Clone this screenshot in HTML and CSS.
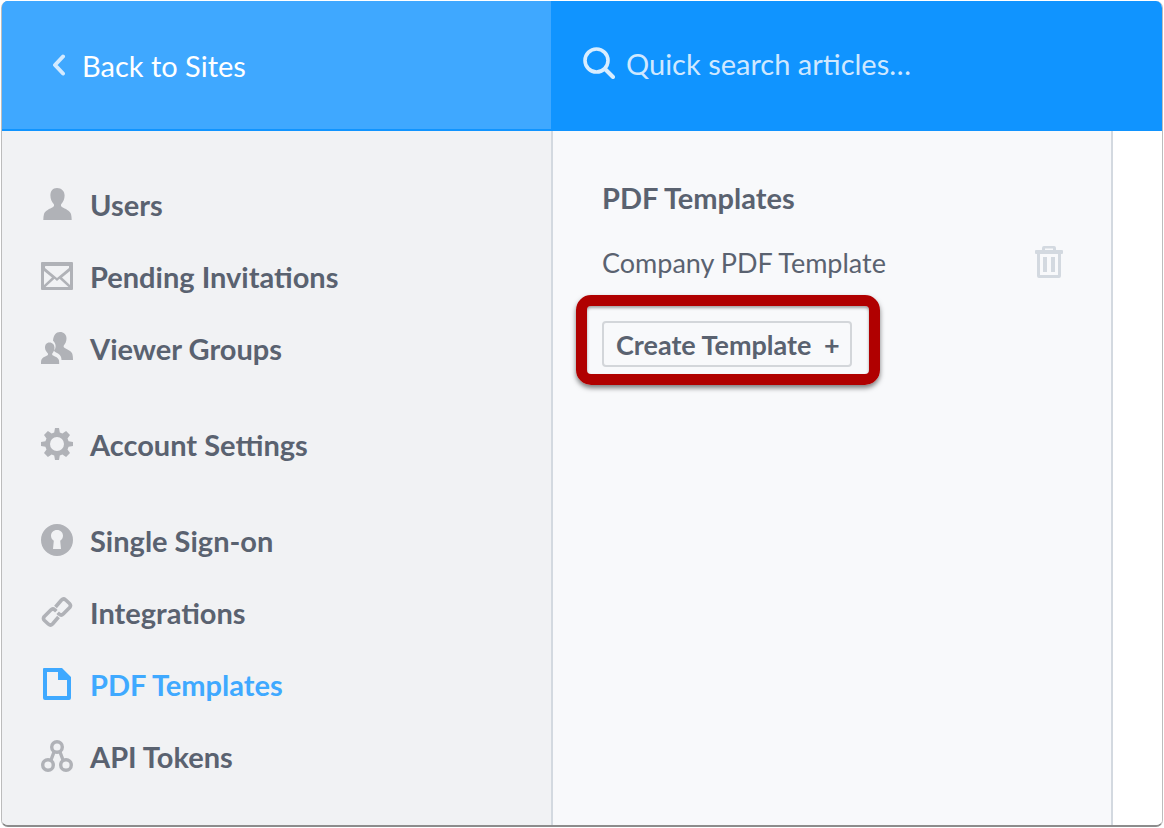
FILE: index.html
```html
<!DOCTYPE html>
<html lang="en">
<head>
    <meta charset="UTF-8">
    <meta name="viewport" content="width=device-width, initial-scale=1.0">
    <title>PDF Templates</title>
    <link rel="stylesheet" href="styles.css">
</head>
<body>
    <div class="window">
        <header class="top-bar">
            <a class="back-link">
                <svg class="back-icon" viewBox="0 0 14 22"><path d="M11 2.5 3 11l8 8.5" fill="none" stroke="currentColor" stroke-width="4" stroke-linecap="round" stroke-linejoin="round"/></svg>
                <span>Back to Sites</span>
            </a>
            <div class="search-box">
                <svg class="search-icon" viewBox="0 0 32 32"><circle cx="13.5" cy="13.5" r="11.5" fill="none" stroke="currentColor" stroke-width="3.6"/><path d="M22 22l8 8" fill="none" stroke="currentColor" stroke-width="4" stroke-linecap="round"/></svg>
                <span>Quick search articles…</span>
            </div>
        </header>

        <div class="panes">
            <nav class="side-nav">
                <ul class="nav-group">
                    <li class="nav-item">
                        <svg class="nav-icon" viewBox="0 0 32 32"><path d="M16 0c4.6 0 7.6 3.2 7.6 7.6 0 3.400-1.300 6.400-3.300 8.400-.6.900-.5 2.200.6 2.900 3.500 1.800 7.900 3.600 9.100 7.100.4 1.700.7 3.700.7 6H2.300c0-2.300.3-4.300.7-6 1.200-3.500 5.600-5.300 9.100-7.100 1.100-.7 1.200-2 .6-2.900-2-2-3.300-5-3.300-8.400C9.400 3.200 11.400 0 16 0z"/></svg>
                        <span>Users</span>
                    </li>
                    <li class="nav-item">
                        <svg class="nav-icon" viewBox="0 0 32 32"><path fill-rule="evenodd" d="M1 2h30a1 1 0 0 1 1 1v26a1 1 0 0 1-1 1H1a1 1 0 0 1-1-1V3a1 1 0 0 1 1-1zm3 4.500V8l12 10L28 8V6H4.500zM3 11v14l8-7.500zm26 0-8 6.500 8 7.500zM4.500 27h23L18.500 18.800 16 21l-2.500-2.200z"/></svg>
                        <span>Pending Invitations</span>
                    </li>
                    <li class="nav-item">
                        <svg class="nav-icon" viewBox="0 0 32 32"><path d="M19 0c3.700 0 6.500 2.500 6.500 6.500 0 3-1.200 5.300-2.700 7-.5 1 0 2 1 2.500 3 1.500 6.300 3 7.400 5.600.5 1.800.8 3.600.8 6.400H20.500c0-3-1-5-3.500-6.500-2-1.200-4-2-4-3 1.500-1.500 1.800-3.500 1.500-5.500-.3-2-1.500-3.500-2.500-4.300C12.500 3 15 0 19 0zM8.500 10.500c3.200 0 5 2.300 5 5.300 0 2.400-1 4.400-2.200 5.700-.4.800 0 1.600.8 2 2.500 1.300 5 2.300 5.700 4.200.3 1 .4 2.300.4 4.300H0c0-2 .1-3.300.4-4.300.7-1.900 3.200-2.900 5.700-4.200.8-.4 1.200-1.200.8-2C5.700 20.200 4 18.200 4 15.800c0-3 1.300-5.300 4.500-5.300z"/></svg>
                        <span>Viewer Groups</span>
                    </li>
                </ul>
                <ul class="nav-group">
                    <li class="nav-item">
                        <svg class="nav-icon" viewBox="0 0 32 32"><path fill-rule="evenodd" d="M14 0h4l.8 4.400 2.600 1.100L25.100 3 29 6.900l-2.500 3.700 1.100 2.600L32 14v4l-4.400.8-1.100 2.600 2.500 3.700-3.900 3.900-3.700-2.500-2.600 1.100L18 32h-4l-.8-4.400-2.600-1.100L6.900 29 3 25.100l2.500-3.700-1.100-2.600L0 18v-4l4.400-.8 1.100-2.600L3 6.900 6.900 3l3.700 2.500 2.600-1.100zm2 9a7 7 0 1 0 0 14 7 7 0 0 0 0-14z"/></svg>
                        <span>Account Settings</span>
                    </li>
                </ul>
                <ul class="nav-group">
                    <li class="nav-item">
                        <svg class="nav-icon" viewBox="0 0 32 32"><path fill-rule="evenodd" d="M16 0a16 16 0 1 1 0 32 16 16 0 0 1 0-32zm0 6c-3.600 0-6 2.600-6 5.800 0 2.200 1.200 4 2.800 5l-.8 8.200h8l-.8-8.200c1.600-1 2.800-2.800 2.800-5C22 8.600 19.600 6 16 6z"/></svg>
                        <span>Single Sign-on</span>
                    </li>
                    <li class="nav-item">
                        <svg class="nav-icon" viewBox="0 0 32 32"><g fill="none" stroke="currentColor" stroke-width="3.600" stroke-linejoin="round"><path d="M14.500 11 20.500 4 a3 3 0 0 1 4-.2l4 3.700a3 3 0 0 1 .2 4l-6.500 6.500a3 3 0 0 1-4 .2l-1.500-1.500"/><path d="M17.500 21 11.500 28a3 3 0 0 1-4 .2l-4-3.700a3 3 0 0 1-.2-4L9.800 14a3 3 0 0 1 4-.2l1.500 1.500"/></g></svg>
                        <span>Integrations</span>
                    </li>
                    <li class="nav-item active">
                        <svg class="nav-icon" viewBox="0 0 32 32"><path fill-rule="evenodd" d="M3 0h18l9 9v21a2 2 0 0 1-2 2H4a2 2 0 0 1-2-2V1a1 1 0 0 1 1-1zm3 4v24h20V12h-9V4z"/></svg>
                        <span>PDF Templates</span>
                    </li>
                    <li class="nav-item">
                        <svg class="nav-icon" viewBox="0 0 32 32"><g fill="none" stroke="currentColor" stroke-width="3.400"><circle cx="16" cy="7" r="5.300"/><circle cx="7" cy="25" r="5.300"/><circle cx="25" cy="25" r="5.300"/><path d="M13 12 10 20M19 12l3 8"/></g></svg>
                        <span>API Tokens</span>
                    </li>
                </ul>
            </nav>

            <main class="templates">
                <h2>PDF Templates</h2>
                <div class="template-row">
                    <span>Company PDF Template</span>
                    <svg class="trash-icon" viewBox="0 0 28 32"><path fill-rule="evenodd" d="M9 0h10a2 2 0 0 1 2 2v2h6a1 1 0 0 1 1 1v2a1 1 0 0 1-1 1h-1v22a2 2 0 0 1-2 2H4a2 2 0 0 1-2-2V8H1a1 1 0 0 1-1-1V5a1 1 0 0 1 1-1h6V2a2 2 0 0 1 2-2zm1 2.500V4h8V2.500zM5 8v21h18V8zm3 3h4v15H8zm8 0h4v15h-4z"/></svg>
                </div>
                <div class="button-wrap">
                    <button class="create-btn">Create Template <span class="plus">+</span></button>
                    <div class="highlight"></div>
                </div>
            </main>

            <div class="blank-pane"></div>
        </div>
    </div>
</body>
</html>
```

FILE: styles.css
```css
/* Base Styles */

* {
    box-sizing: border-box;
}

html, body {
    margin: 0;
    height: 100%;
    background-color: #fff;
    overflow: hidden;
}

body {
    font-family: "Lato", "Open Sans", sans-serif;
    color: #5a6270;
}

.window {
    display: flex;
    flex-direction: column;
    width: 1162px;
    height: 826px;
    margin: 1px 1px 0;
    background-color: #fff;
    border: 1px solid #bcbcbc;
    border-top: none;
    border-bottom: 2px solid #8c8c8c;
    border-radius: 7px;
    overflow: hidden;
}

/* Top bar */

.top-bar {
    display: flex;
    height: 130px;
    background-color: #1094ff;
}

.back-link {
    display: flex;
    align-items: center;
    width: 549px;
    height: 128px;
    padding-left: 50px;
    background-color: #3fa8ff;
    color: #fff;
    font-size: 29px;
}

.back-icon {
    width: 14px;
    height: 22px;
    margin-right: 16px;
    color: #d3eaff;
}

.search-box {
    display: flex;
    align-items: center;
    height: 124px;
    margin-left: 2px;
    padding-left: 30px;
    color: #cfe8ff;
    font-size: 29px;
}

.search-icon {
    width: 32px;
    height: 32px;
    margin-right: 11px;
    color: #d8edff;
}

/* Panes */

.panes {
    display: flex;
    flex: 1;
    min-height: 0;
}

.side-nav {
    width: 551px;
    padding-top: 37px;
    background-color: #f1f2f4;
    border-right: 2px solid #d3d9e0;
}

.nav-group {
    margin: 0 0 24px;
    padding: 0;
    list-style: none;
}

.nav-item {
    display: flex;
    align-items: center;
    height: 72px;
    padding-left: 39px;
    font-size: 29px;
    font-weight: 700;
}

.nav-icon {
    width: 32px;
    height: 32px;
    margin-right: 17px;
    flex-shrink: 0;
    color: #b0b2b7;
    fill: currentColor;
}

.nav-item .nav-icon g {
    fill: none;
}

.nav-item.active {
    color: #3fa9ff;
}

.nav-item.active .nav-icon {
    color: #3fa9ff;
}

.templates {
    width: 560px;
    padding: 48px 48px 0 49px;
    background-color: #f8f9fb;
    border-right: 2px solid #d3d9e0;
}

.templates h2 {
    margin: 0;
    font-size: 29px;
    line-height: 38px;
    font-weight: 700;
}

.template-row {
    display: flex;
    justify-content: space-between;
    align-items: center;
    height: 40px;
    margin-top: 25px;
    font-size: 27px;
}

.trash-icon {
    width: 28px;
    height: 32px;
    fill: #d3d9e0;
}

.button-wrap {
    position: relative;
    width: max-content;
    margin-top: 39px;
}

.create-btn {
    display: block;
    width: 250px;
    height: 46px;
    padding: 0 0 0 12px;
    background-color: #f8f9fb;
    border: 2px solid #d3d6da;
    border-radius: 4px;
    color: #5a6270;
    font-family: inherit;
    font-size: 27px;
    font-weight: 700;
    text-align: left;
}

.plus {
    margin-left: 6px;
}

.highlight {
    position: absolute;
    top: -26px;
    left: -26px;
    width: 304px;
    height: 90px;
    border: 11px solid #b00000;
    border-radius: 15px;
    box-shadow: 0 3px 5px rgba(0, 0, 0, 0.5), inset 0 2px 3px rgba(0, 0, 0, 0.35);
}

.blank-pane {
    flex: 1;
    background-color: #fff;
}
```
